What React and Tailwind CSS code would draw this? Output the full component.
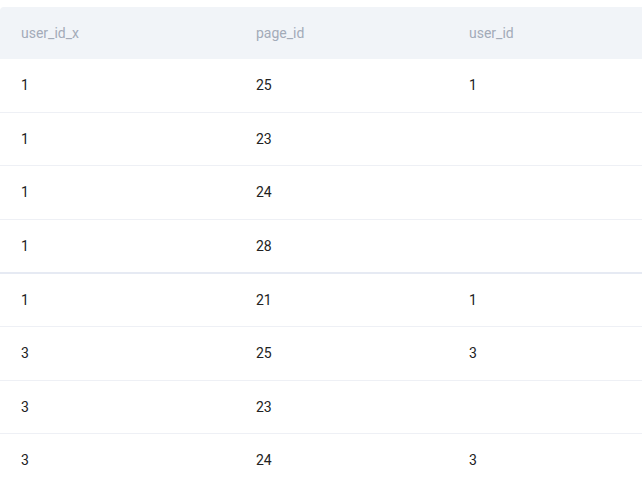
import React from "react";

const rows = [
  { x: "1", page: "25", user: "1" },
  { x: "1", page: "23", user: "" },
  { x: "1", page: "24", user: "" },
  { x: "1", page: "28", user: "", thick: true },
  { x: "1", page: "21", user: "1" },
  { x: "3", page: "25", user: "3" },
  { x: "3", page: "23", user: "" },
  { x: "3", page: "24", user: "3" },
];

export default function App() {
  return (
    <div className="w-[642px] h-[481px] bg-white overflow-hidden pt-[7px] font-['Roboto',sans-serif] text-[14px]">
      <div className="grid grid-cols-[235px_213px_1fr] h-[52px] items-center bg-[#f1f4f8] rounded-tl-[4px] text-[#a3abb8] pl-[21px] pt-[1px]">
        <div>user_id_x</div>
        <div>page_id</div>
        <div>user_id</div>
      </div>
      {rows.map((r, i) => (
        <div
          key={i}
          className={
            "grid grid-cols-[235px_213px_1fr] items-center pl-[21px] pt-[1px] text-[#222]" +
            (r.thick
              ? " h-[54px] border-b-2 border-[#e6eaf3]"
              : " h-[53.5px] border-b border-[#eef0f5]")
          }
        >
          <div>{r.x}</div>
          <div>{r.page}</div>
          <div>{r.user}</div>
        </div>
      ))}
    </div>
  );
}
